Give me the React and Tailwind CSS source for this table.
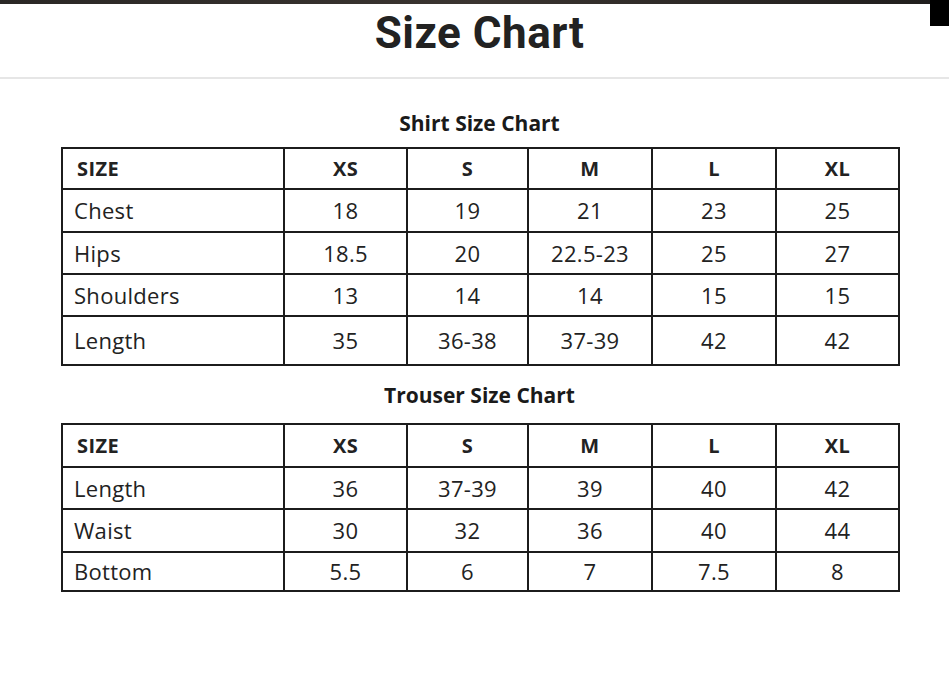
const SIZES = ['XS', 'S', 'M', 'L', 'XL']

const SHIRT = [
  { label: 'Chest', values: ['18', '19', '21', '23', '25'], h: 'h-[43px]' },
  { label: 'Hips', values: ['18.5', '20', '22.5-23', '25', '27'], h: 'h-[42px]' },
  { label: 'Shoulders', values: ['13', '14', '14', '15', '15'], h: 'h-[42px]' },
  { label: 'Length', values: ['35', '36-38', '37-39', '42', '42'], h: 'h-[49px]' },
]

const TROUSER = [
  { label: 'Length', values: ['36', '37-39', '39', '40', '42'], h: 'h-[42px]' },
  { label: 'Waist', values: ['30', '32', '36', '40', '44'], h: 'h-[43px]' },
  { label: 'Bottom', values: ['5.5', '6', '7', '7.5', '8'], h: 'h-[39px]' },
]

const SizeTable = ({ rows, headH }) => (
  <table className="w-[837px] table-fixed border-collapse border-2 border-[#1c1c1c] text-[#222]">
    <colgroup>
      <col className="w-[222px]" />
      <col className="w-[123px]" />
      <col className="w-[121px]" />
      <col className="w-[124px]" />
      <col className="w-[124px]" />
      <col className="w-[123px]" />
    </colgroup>
    <thead>
      <tr className={headH}>
        <th className="border-2 border-[#1c1c1c] pl-[14px] text-left text-[20px] font-bold tracking-[0.4px]">SIZE</th>
        {SIZES.map(s => (
          <th key={s} className="border-2 border-[#1c1c1c] text-center text-[20px] font-bold tracking-[0.4px]">{s}</th>
        ))}
      </tr>
    </thead>
    <tbody>
      {rows.map(r => (
        <tr key={r.label} className={r.h}>
          <td className="border-2 border-[#1c1c1c] pl-[11px] text-left text-[22px] tracking-[0.3px]">{r.label}</td>
          {r.values.map((v, i) => (
            <td key={i} className="border-2 border-[#1c1c1c] text-center text-[22px] tracking-[0.3px]">{v}</td>
          ))}
        </tr>
      ))}
    </tbody>
  </table>
)

export default function App() {
  return (
    <div className="relative w-[949px] h-[686px] overflow-hidden bg-white" style={{ fontFamily: '"Open Sans", "Liberation Sans", sans-serif' }}>
      {/* photo strip on top */}
      <div className="h-[4px] bg-gradient-to-r from-[#2a2725] via-[#3a3430] to-[#1f1d1c]" />
      <div className="absolute top-0 right-0 w-[19px] h-[26px] bg-black" />

      {/* header */}
      <div className="h-[73px] flex justify-center pl-[10px]">
        <h1 className="mt-[1px] text-[44px] font-bold leading-[56px] tracking-[0.5px] text-[#222]" style={{ fontFamily: 'Roboto, "Liberation Sans", sans-serif' }}>
          Size Chart
        </h1>
      </div>
      <div className="h-[2px] bg-[#e6e6e6]" />

      <div className="pl-[61px]">
        <h2 className="w-[837px] mt-[30px] text-center text-[21px] font-bold leading-[28px] text-[#1a1a1a]">Shirt Size Chart</h2>
        <div className="mt-[10px]">
          <SizeTable rows={SHIRT} headH="h-[41px]" />
        </div>

        <h2 className="w-[837px] mt-[15px] text-center text-[21px] font-bold leading-[28px] text-[#1a1a1a]">Trouser Size Chart</h2>
        <div className="mt-[14px]">
          <SizeTable rows={TROUSER} headH="h-[43px]" />
        </div>
      </div>
    </div>
  )
}
